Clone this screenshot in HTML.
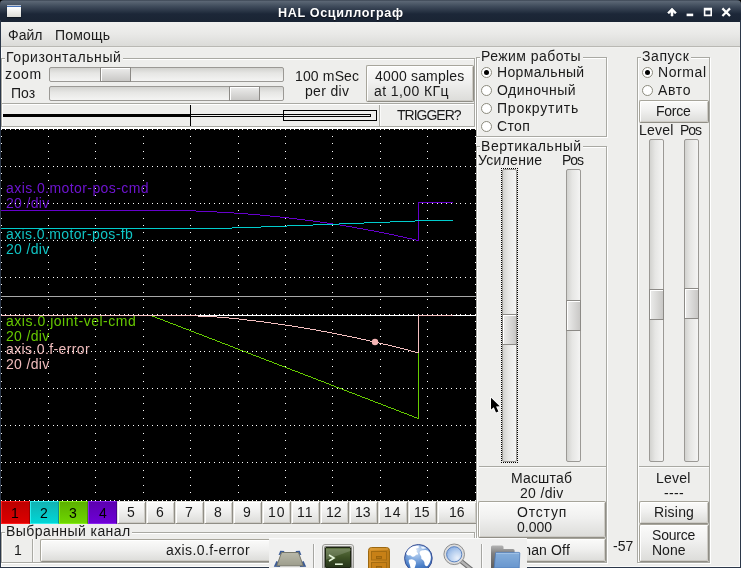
<!DOCTYPE html>
<html><head><meta charset="utf-8"><title>HAL</title>
<style>
html,body{margin:0;padding:0}
body{width:741px;height:568px;overflow:hidden;background:#eeeeec;position:relative;font-family:"Liberation Sans",sans-serif;}
.t{position:absolute;white-space:pre;line-height:16px;font-size:14px;color:#1a1a1a;will-change:transform;}
.a{position:absolute;box-sizing:border-box}
.btn{position:absolute;box-sizing:border-box;border:1px solid #a7a59b;border-right-color:#908e86;border-bottom-color:#908e86;border-radius:2px;background:linear-gradient(#fbfbfa,#f0f0ef 45%,#dcdcd9);box-shadow:inset 1px 1px 0 #ffffff,inset -1px -1px 0 #cdcbc5}
.fr{position:absolute;box-sizing:border-box;border:1px solid #a9a9a3;box-shadow:inset 1px 1px 0 #fff,1px 1px 0 #fff}
.hs{position:absolute;box-sizing:border-box;border:1px solid #9b9995;border-radius:2px;background:linear-gradient(#d2d2cf,#e6e6e4 40%,#f4f4f3)}
.ht{position:absolute;box-sizing:border-box;border:1px solid #8c8a86;background:linear-gradient(#ececeb,#c9c8c6);box-shadow:inset 1px 1px 0 #fff}
.vs{position:absolute;box-sizing:border-box;border:1px solid #9b9995;border-radius:2px;background:linear-gradient(90deg,#d2d2cf,#e6e6e4 40%,#f4f4f3)}
.vt{position:absolute;box-sizing:border-box;border:1px solid #8c8a86;background:linear-gradient(90deg,#ececeb,#c9c8c6);box-shadow:inset 1px 1px 0 #fff}
.rd{position:absolute;box-sizing:border-box;width:11px;height:11px;border-radius:50%;border:1px solid #8c8b7e;background:#fff}
.rd.on::after{content:"";position:absolute;left:2px;top:2px;width:5px;height:5px;border-radius:50%;background:#000}
.cb{position:absolute;box-sizing:border-box;top:501px;height:23px}
</style></head><body>

<div class="a" style="left:0;top:0;width:741px;height:22px;background:linear-gradient(#2e3846 0,#5d6876 1px,#3c4858 7px,#1c2738 14px,#1a2434 22px);border-radius:4px 4px 0 0"></div>
<div class="a" style="left:0;top:0;width:741px;height:4px;background:#000;z-index:-1"></div>
<div class="a" style="left:0;top:20px;width:1px;height:548px;background:#2b3749"></div><div class="a" style="left:1px;top:47px;width:1px;height:520px;background:#fafaf9"></div>
<div class="a" style="left:740px;top:20px;width:1px;height:548px;background:#2b3749"></div><div class="a" style="left:739px;top:47px;width:1px;height:520px;background:#f8f8f7"></div>
<div class="a" style="left:0;top:567px;width:741px;height:1px;background:#2b3749"></div><div class="a" style="left:1px;top:566px;width:739px;height:1px;background:#fafaf9"></div>
<div class="a" style="left:7px;top:5px;width:14px;height:12px;background:linear-gradient(#b9c0cc 0,#b9c0cc 1px,#3d6ab2 1px,#4a76ba 2px,#ffffff 2px,#fdfdfd 3px,#dcdcd7 12px);box-shadow:0 1px 1px rgba(10,14,22,.55)"></div>
<svg class="a" style="left:660px;top:0" width="80" height="22" viewBox="660 0 80 22">
<path d="M672 8 L667.6 12.6 L669 13.8 L671 11.8 L671 16 L673 16 L673 11.8 L675 13.8 L676.4 12.6 Z" fill="#fff" stroke="#fff" stroke-width="0.6" stroke-linejoin="round"/>
<rect x="686.6" y="13.6" width="6.6" height="2.6" fill="#fff"/>
<path d="M703.8 7.8 h8.2 v8.4 h-8.2 Z M705.4 10.4 v4.2 h5 v-4.2 Z" fill="#fff" fill-rule="evenodd"/>
<path d="M722.4 8.4 L730 16 M730 8.4 L722.4 16" stroke="#fff" stroke-width="2.2" fill="none"/>
</svg>
<div class="a" style="left:1px;top:22px;width:739px;height:24px;background:linear-gradient(#f1f1ef,#e9e9e7 50%,#dbdbd8)"></div>
<div class="a" style="left:1px;top:46px;width:739px;height:1px;background:#b9b8b3"></div>
<div class="a" style="left:1px;top:47px;width:739px;height:1px;background:#f1f1ef"></div>
<div class="a" style="left:1px;top:58px;width:1px;height:69px;background:#a9a9a3"></div><div class="a" style="left:2px;top:59px;width:1px;height:69px;background:#fff"></div><div class="fr" style="left:1px;top:58px;width:474px;height:46px"></div>
<div class="a" style="left:5px;top:52px;width:118px;height:14px;background:#eeeeec"></div>
<div class="hs" style="left:49px;top:67px;width:235px;height:15px"></div>
<div class="ht" style="left:100px;top:67px;width:31px;height:15px"></div>
<div class="hs" style="left:49px;top:86px;width:235px;height:15px"></div>
<div class="ht" style="left:229px;top:86px;width:31px;height:15px"></div>
<div class="btn" style="left:366px;top:65px;width:108px;height:37px"></div>
<div class="a" style="left:1px;top:126px;width:474px;height:1px;background:#a9a9a3"></div><div class="a" style="left:474px;top:104px;width:1px;height:23px;background:#a9a9a3"></div><div class="a" style="left:475px;top:104px;width:1px;height:25px;background:#fff"></div>
<div class="a" style="left:2px;top:127px;width:474px;height:2px;background:#fff"></div>
<div class="a" style="left:3px;top:114px;width:188px;height:3px;background:#000"></div>
<div class="a" style="left:190px;top:114px;width:181px;height:3px;border:1px solid #000;background:#eeeeec"></div>
<div class="a" style="left:190px;top:105px;width:1px;height:21px;background:#000"></div>
<div class="a" style="left:283px;top:110px;width:94px;height:11px;border:1px solid #000"></div>
<div class="a" style="left:379px;top:105px;width:1px;height:21px;background:#a9a9a3"></div>
<div class="a" style="left:380px;top:105px;width:1px;height:21px;background:#fafaf9"></div>
<div class="a" style="left:1px;top:129px;width:475px;height:372px;background:#000"></div>
<svg class="a" style="left:0;top:128px;z-index:2" width="477" height="373" viewBox="0 128 477 373" shape-rendering="crispEdges"><defs><path id="rw" d="M1 0.5h1M5 0.5h1M10 0.5h1M15 0.5h1M19 0.5h1M24 0.5h1M29 0.5h1M34 0.5h1M38 0.5h1M43 0.5h1M48 0.5h1M53 0.5h1M57 0.5h1M62 0.5h1M67 0.5h1M72 0.5h1M76 0.5h1M81 0.5h1M86 0.5h1M91 0.5h1M95 0.5h1M100 0.5h1M105 0.5h1M110 0.5h1M114 0.5h1M119 0.5h1M124 0.5h1M128 0.5h1M133 0.5h1M138 0.5h1M143 0.5h1M147 0.5h1M152 0.5h1M157 0.5h1M162 0.5h1M166 0.5h1M171 0.5h1M176 0.5h1M181 0.5h1M185 0.5h1M190 0.5h1M195 0.5h1M200 0.5h1M204 0.5h1M209 0.5h1M214 0.5h1M219 0.5h1M223 0.5h1M228 0.5h1M233 0.5h1M238 0.5h1M242 0.5h1M247 0.5h1M252 0.5h1M256 0.5h1M261 0.5h1M266 0.5h1M271 0.5h1M275 0.5h1M280 0.5h1M285 0.5h1M290 0.5h1M294 0.5h1M299 0.5h1M304 0.5h1M309 0.5h1M313 0.5h1M318 0.5h1M323 0.5h1M328 0.5h1M332 0.5h1M337 0.5h1M342 0.5h1M347 0.5h1M351 0.5h1M356 0.5h1M361 0.5h1M365 0.5h1M370 0.5h1M375 0.5h1M380 0.5h1M384 0.5h1M389 0.5h1M394 0.5h1M399 0.5h1M403 0.5h1M408 0.5h1M413 0.5h1M418 0.5h1M422 0.5h1M427 0.5h1M432 0.5h1M437 0.5h1M441 0.5h1M446 0.5h1M451 0.5h1M456 0.5h1M460 0.5h1M465 0.5h1M470 0.5h1M475 0.5h1" stroke="#fff" stroke-width="1" fill="none"/><path id="cl" d="M0 0.5h1M0 7.5h1M0 14.5h1M0 22.5h1M0 29.5h1M0 37.5h1M0 44.5h1M0 51.5h1M0 59.5h1M0 66.5h1M0 74.5h1M0 81.5h1M0 89.5h1M0 96.5h1M0 103.5h1M0 111.5h1M0 118.5h1M0 126.5h1M0 133.5h1M0 140.5h1M0 148.5h1M0 155.5h1M0 163.5h1M0 170.5h1M0 178.5h1M0 185.5h1M0 192.5h1M0 200.5h1M0 207.5h1M0 215.5h1M0 222.5h1M0 230.5h1M0 237.5h1M0 244.5h1M0 252.5h1M0 259.5h1M0 267.5h1M0 274.5h1M0 281.5h1M0 289.5h1M0 296.5h1M0 304.5h1M0 311.5h1M0 319.5h1M0 326.5h1M0 333.5h1M0 341.5h1M0 348.5h1M0 356.5h1M0 363.5h1M0 371.5h1" stroke="#fff" stroke-width="1" fill="none"/></defs><use href="#rw" y="129"/><use href="#rw" y="166"/><use href="#rw" y="203"/><use href="#rw" y="240"/><use href="#rw" y="277"/><use href="#rw" y="314"/><use href="#rw" y="351"/><use href="#rw" y="388"/><use href="#rw" y="425"/><use href="#rw" y="462"/><use href="#rw" y="500"/><use href="#cl" x="1" y="129"/><use href="#cl" x="48" y="129"/><use href="#cl" x="95" y="129"/><use href="#cl" x="143" y="129"/><use href="#cl" x="190" y="129"/><use href="#cl" x="238" y="129"/><use href="#cl" x="285" y="129"/><use href="#cl" x="332" y="129"/><use href="#cl" x="380" y="129"/><use href="#cl" x="427" y="129"/><use href="#cl" x="475" y="129"/><rect x="1" y="296" width="475" height="1" fill="#a8a8a8"/><rect x="1" y="315" width="475" height="1" fill="#ffffff"/><path d="M1 210.5h195M196 211.5h21M217 212.5h17M234 213.5h14M248 214.5h12M260 215.5h10M270 216.5h10M280 217.5h9M289 218.5h8M297 219.5h8M305 220.5h8M313 221.5h7M320 222.5h7M327 223.5h6M333 224.5h7M340 225.5h6M346 226.5h6M352 227.5h5M357 228.5h6M363 229.5h5M368 230.5h6M374 231.5h5M379 232.5h5M384 233.5h5M389 234.5h5M394 235.5h4M398 236.5h5M403 237.5h4M407 238.5h5M412 239.5h4M416 240.5h2M418 202.5h35M418.5 202v39" stroke="#6600cc" fill="none"/><path d="M1 228.5h231M232 227.5h29M261 226.5h26M287 225.5h26M313 224.5h26M339 223.5h25M364 222.5h26M390 221.5h25M415 220.5h38" stroke="#00cccc" fill="none"/><path d="M1 315.5h151M152 316.5h3M155 317.5h2M157 318.5h3M160 319.5h3M163 320.5h2M165 321.5h3M168 322.5h2M170 323.5h3M173 324.5h3M176 325.5h2M178 326.5h3M181 327.5h2M183 328.5h3M186 329.5h3M189 330.5h2M191 331.5h3M194 332.5h2M196 333.5h3M199 334.5h3M202 335.5h2M204 336.5h3M207 337.5h2M209 338.5h3M212 339.5h3M215 340.5h2M217 341.5h3M220 342.5h2M222 343.5h3M225 344.5h3M228 345.5h2M230 346.5h3M233 347.5h2M235 348.5h3M238 349.5h2M240 350.5h3M243 351.5h3M246 352.5h2M248 353.5h3M251 354.5h2M253 355.5h3M256 356.5h3M259 357.5h2M261 358.5h3M264 359.5h2M266 360.5h3M269 361.5h3M272 362.5h2M274 363.5h3M277 364.5h2M279 365.5h3M282 366.5h3M285 367.5h2M287 368.5h3M290 369.5h2M292 370.5h3M295 371.5h3M298 372.5h2M300 373.5h3M303 374.5h2M305 375.5h3M308 376.5h3M311 377.5h2M313 378.5h3M316 379.5h2M318 380.5h3M321 381.5h3M324 382.5h2M326 383.5h3M329 384.5h2M331 385.5h3M334 386.5h2M336 387.5h3M339 388.5h3M342 389.5h2M344 390.5h3M347 391.5h2M349 392.5h3M352 393.5h3M355 394.5h2M357 395.5h3M360 396.5h2M362 397.5h3M365 398.5h3M368 399.5h2M370 400.5h3M373 401.5h2M375 402.5h3M378 403.5h3M381 404.5h2M383 405.5h3M386 406.5h2M388 407.5h3M391 408.5h3M394 409.5h2M396 410.5h3M399 411.5h2M401 412.5h3M404 413.5h3M407 414.5h2M409 415.5h3M412 416.5h2M414 417.5h3M417 418.5h1M418 315.5h35M418.5 315v104" stroke="#66cc00" fill="none"/><path d="M1 315.5h197M198 316.5h19M217 317.5h12M229 318.5h10M239 319.5h8M247 320.5h9M256 321.5h8M264 322.5h7M271 323.5h7M278 324.5h7M285 325.5h7M292 326.5h6M298 327.5h6M304 328.5h6M310 329.5h6M316 330.5h5M321 331.5h6M327 332.5h5M332 333.5h5M337 334.5h5M342 335.5h5M347 336.5h5M352 337.5h5M357 338.5h4M361 339.5h5M366 340.5h4M370 341.5h5M375 342.5h4M379 343.5h4M383 344.5h5M388 345.5h4M392 346.5h4M396 347.5h4M400 348.5h4M404 349.5h4M408 350.5h3M411 351.5h4M415 352.5h3M418 315.5h35M418.5 315v38" stroke="#f4c0c0" fill="none"/><circle cx="375" cy="342" r="3.2" fill="#f4b4b4" shape-rendering="auto"/></svg>
<div class="cb" style="left:1px;width:29px;background:linear-gradient(#bd0000,#dc0000);border:1px solid #ff1e1e;border-right-color:#9a0000"></div>
<div class="cb" style="left:30px;width:29px;background:linear-gradient(#12b2b2,#00d6d6);border:1px solid #30eeee;border-right-color:#0e9090"></div>
<div class="cb" style="left:59px;width:29px;background:linear-gradient(#5cb000,#6ed600);border:1px solid #86ee18;border-right-color:#4a9000"></div>
<div class="cb" style="left:88px;width:29px;background:linear-gradient(#5c00b0,#6e00d6);border:1px solid #8a24ee;border-right-color:#480090"></div>
<div class="btn" style="left:117px;top:501px;width:29px;height:23px;border-radius:1px;border-left-color:#e2e1dc;border-top-color:#e2e1dc"></div>
<div class="btn" style="left:146px;top:501px;width:29px;height:23px;border-radius:1px;border-left-color:#e2e1dc;border-top-color:#e2e1dc"></div>
<div class="btn" style="left:175px;top:501px;width:29px;height:23px;border-radius:1px;border-left-color:#e2e1dc;border-top-color:#e2e1dc"></div>
<div class="btn" style="left:204px;top:501px;width:29px;height:23px;border-radius:1px;border-left-color:#e2e1dc;border-top-color:#e2e1dc"></div>
<div class="btn" style="left:233px;top:501px;width:29px;height:23px;border-radius:1px;border-left-color:#e2e1dc;border-top-color:#e2e1dc"></div>
<div class="btn" style="left:262px;top:501px;width:29px;height:23px;border-radius:1px;border-left-color:#e2e1dc;border-top-color:#e2e1dc"></div>
<div class="btn" style="left:291px;top:501px;width:29px;height:23px;border-radius:1px;border-left-color:#e2e1dc;border-top-color:#e2e1dc"></div>
<div class="btn" style="left:320px;top:501px;width:29px;height:23px;border-radius:1px;border-left-color:#e2e1dc;border-top-color:#e2e1dc"></div>
<div class="btn" style="left:349px;top:501px;width:29px;height:23px;border-radius:1px;border-left-color:#e2e1dc;border-top-color:#e2e1dc"></div>
<div class="btn" style="left:378px;top:501px;width:30px;height:23px;border-radius:1px;border-left-color:#e2e1dc;border-top-color:#e2e1dc"></div>
<div class="btn" style="left:408px;top:501px;width:29px;height:23px;border-radius:1px;border-left-color:#e2e1dc;border-top-color:#e2e1dc"></div>
<div class="btn" style="left:437px;top:501px;width:40px;height:23px;border-radius:1px;border-left-color:#e2e1dc;border-top-color:#e2e1dc"></div>
<div class="fr" style="left:1px;top:532px;width:474px;height:31px"></div>
<div class="a" style="left:5px;top:526px;width:127px;height:14px;background:#eeeeec"></div>
<div class="a" style="left:32px;top:539px;width:1px;height:23px;background:#a9a9a3"></div>
<div class="a" style="left:33px;top:539px;width:1px;height:23px;background:#fafaf9"></div>
<div class="btn" style="left:40px;top:539px;width:340px;height:23px"></div>
<div class="fr" style="left:476px;top:57px;width:131px;height:80px"></div>
<div class="a" style="left:480px;top:51px;width:103px;height:14px;background:#eeeeec"></div>
<div class="rd on" style="left:481px;top:67px"></div>
<div class="rd" style="left:481px;top:85px"></div>
<div class="rd" style="left:481px;top:103px"></div>
<div class="rd" style="left:481px;top:121px"></div>
<div class="fr" style="left:476px;top:146px;width:131px;height:417px"></div>
<div class="a" style="left:480px;top:140px;width:103px;height:14px;background:#eeeeec"></div>
<div class="a" style="left:501px;top:168px;width:17px;height:295px;border:1px dotted #000"></div>
<div class="vs" style="left:502px;top:169px;width:15px;height:293px"></div>
<div class="vt" style="left:502px;top:314px;width:15px;height:31px"></div>
<div class="vs" style="left:566px;top:169px;width:15px;height:293px"></div>
<div class="vt" style="left:566px;top:300px;width:15px;height:31px"></div>
<div class="a" style="left:479px;top:466px;width:127px;height:1px;background:#a9a9a3"></div>
<div class="a" style="left:479px;top:467px;width:127px;height:1px;background:#fafaf9"></div>
<div class="btn" style="left:478px;top:501px;width:128px;height:37px"></div>
<div class="btn" style="left:478px;top:538px;width:128px;height:24px"></div>
<div class="fr" style="left:637px;top:57px;width:73px;height:506px"></div>
<div class="a" style="left:641px;top:51px;width:50px;height:14px;background:#eeeeec"></div>
<div class="rd on" style="left:642px;top:67px"></div>
<div class="rd" style="left:642px;top:85px"></div>
<div class="btn" style="left:639px;top:100px;width:70px;height:23px"></div>
<div class="vs" style="left:649px;top:139px;width:15px;height:323px"></div>
<div class="vt" style="left:649px;top:289px;width:15px;height:31px"></div>
<div class="vs" style="left:684px;top:139px;width:15px;height:323px"></div>
<div class="vt" style="left:684px;top:288px;width:15px;height:31px"></div>
<div class="a" style="left:639px;top:466px;width:70px;height:1px;background:#a9a9a3"></div>
<div class="a" style="left:639px;top:467px;width:70px;height:1px;background:#fafaf9"></div>
<div class="btn" style="left:639px;top:501px;width:70px;height:23px"></div>
<div class="btn" style="left:639px;top:524px;width:70px;height:38px"></div>
<svg class="a" style="left:488px;top:395px;z-index:5" width="16" height="22" viewBox="0 0 16 22"><path d="M3 2.8 L3 14.6 L5.8 12.2 L8 17.4 L10.4 16.4 L8.1 11.4 L11.8 11.2 Z" fill="#000" stroke="#fff" stroke-width="1.8" stroke-linejoin="round" paint-order="stroke fill"/></svg>
<span class="t" style="left:277.70px;top:5px;color:#ffffff;font-weight:bold;text-shadow:0 1px 1px rgba(0,0,0,.55);font-size:12.6px;letter-spacing:0.643px;">HAL Осциллограф</span>
<span class="t" style="left:8.00px;top:27px;">Файл</span>
<span class="t" style="left:55.00px;top:27px;letter-spacing:0.200px;">Помощь</span>
<span class="t" style="left:6.00px;top:49px;letter-spacing:0.615px;">Горизонтальный</span>
<span class="t" style="left:5.00px;top:66px;letter-spacing:0.667px;">zoom</span>
<span class="t" style="left:10.80px;top:85px;">Поз</span>
<span class="t" style="left:295.20px;top:68px;letter-spacing:0.143px;">100 mSec</span>
<span class="t" style="left:304.80px;top:83px;letter-spacing:0.333px;">per div</span>
<span class="t" style="left:375.00px;top:68px;letter-spacing:0.182px;">4000 samples</span>
<span class="t" style="left:374.00px;top:83px;letter-spacing:0.400px;">at 1,00 КГц</span>
<span class="t" style="left:396.50px;top:107px;letter-spacing:-1.000px;">TRIGGER?</span>
<span class="t" style="left:481.00px;top:48px;letter-spacing:0.455px;">Режим работы</span>
<span class="t" style="left:497.00px;top:64px;letter-spacing:0.333px;">Нормальный</span>
<span class="t" style="left:497.00px;top:82px;letter-spacing:0.500px;">Одиночный</span>
<span class="t" style="left:497.00px;top:100px;letter-spacing:0.778px;">Прокрутить</span>
<span class="t" style="left:497.00px;top:118px;letter-spacing:0.333px;">Стоп</span>
<span class="t" style="left:642.00px;top:48px;letter-spacing:0.600px;">Запуск</span>
<span class="t" style="left:658.00px;top:64px;letter-spacing:0.600px;">Normal</span>
<span class="t" style="left:658.00px;top:82px;letter-spacing:0.667px;">Авто</span>
<span class="t" style="left:656.00px;top:103px;letter-spacing:-0.250px;">Force</span>
<span class="t" style="left:639.00px;top:122px;letter-spacing:0.250px;">Level</span>
<span class="t" style="left:680.00px;top:122px;letter-spacing:-1.000px;">Pos</span>
<span class="t" style="left:481.00px;top:138px;letter-spacing:0.545px;">Вертикальный</span>
<span class="t" style="left:477.50px;top:152px;letter-spacing:0.286px;">Усиление</span>
<span class="t" style="left:562.00px;top:152px;letter-spacing:-1.000px;">Pos</span>
<span class="t" style="left:511.00px;top:470px;letter-spacing:0.167px;">Масштаб</span>
<span class="t" style="left:520.00px;top:485px;letter-spacing:0.333px;">20 /div</span>
<span class="t" style="left:516.50px;top:504px;letter-spacing:0.800px;">Отступ</span>
<span class="t" style="left:516.50px;top:519px;">0.000</span>
<span class="t" style="left:513.00px;top:542px;letter-spacing:0.143px;">Chan Off</span>
<span class="t" style="left:613.00px;top:538px;">-57</span>
<span class="t" style="left:655.80px;top:470px;letter-spacing:0.250px;">Level</span>
<span class="t" style="left:663.70px;top:485px;letter-spacing:0.333px;">----</span>
<span class="t" style="left:654.00px;top:504px;letter-spacing:0.200px;">Rising</span>
<span class="t" style="left:652.00px;top:527px;letter-spacing:-0.200px;">Source</span>
<span class="t" style="left:652.00px;top:542px;">None</span>
<span class="t" style="left:6.00px;top:523px;letter-spacing:0.429px;">Выбранный канал</span>
<span class="t" style="left:13.50px;top:542px;">1</span>
<span class="t" style="left:165.90px;top:542px;letter-spacing:0.385px;">axis.0.f-error</span>
<span class="t" style="left:6.00px;top:180px;color:#6e14d0;letter-spacing:0.421px;">axis.0.motor-pos-cmd</span>
<span class="t" style="left:6.00px;top:195px;color:#6e14d0;letter-spacing:0.333px;">20 /div</span>
<span class="t" style="left:6.00px;top:226px;color:#10c4c4;letter-spacing:0.389px;">axis.0.motor-pos-fb</span>
<span class="t" style="left:6.00px;top:241px;color:#10c4c4;letter-spacing:0.333px;">20 /div</span>
<span class="t" style="left:6.00px;top:313px;color:#66c800;letter-spacing:0.526px;">axis.0.joint-vel-cmd</span>
<span class="t" style="left:6.00px;top:328px;color:#66c800;letter-spacing:0.333px;">20 /div</span>
<span class="t" style="left:6.00px;top:341px;color:#f0bcbc;letter-spacing:0.385px;">axis.0.f-error</span>
<span class="t" style="left:6.00px;top:356px;color:#f0bcbc;letter-spacing:0.333px;">20 /div</span>
<span class="t" style="left:11.00px;top:505px;color:#000;">1</span>
<span class="t" style="left:40.00px;top:505px;color:#000;">2</span>
<span class="t" style="left:69.00px;top:505px;color:#000;">3</span>
<span class="t" style="left:98.50px;top:505px;color:#000;">4</span>
<span class="t" style="left:127.20px;top:504px;">5</span>
<span class="t" style="left:156.20px;top:504px;">6</span>
<span class="t" style="left:185.20px;top:504px;">7</span>
<span class="t" style="left:214.20px;top:504px;">8</span>
<span class="t" style="left:243.20px;top:504px;">9</span>
<span class="t" style="left:267.70px;top:504px;letter-spacing:1.000px;">10</span>
<span class="t" style="left:297.20px;top:504px;letter-spacing:1.000px;">11</span>
<span class="t" style="left:326.20px;top:504px;">12</span>
<span class="t" style="left:355.20px;top:504px;">13</span>
<span class="t" style="left:384.20px;top:504px;letter-spacing:1.000px;">14</span>
<span class="t" style="left:414.20px;top:504px;">15</span>
<span class="t" style="left:448.70px;top:504px;">16</span>
<div class="a" style="left:269px;top:538px;width:258px;height:30px;background:#f0f0ef;border-top:1px solid #fbfbfb;z-index:8"></div>
<svg class="a" style="left:269px;top:538px;z-index:9" width="258" height="30" viewBox="269 538 258 30">
<defs>
<linearGradient id="gTr" x1="0" y1="0" x2="0" y2="1"><stop offset="0" stop-color="#b9b9aa"/><stop offset="1" stop-color="#9d9d8c"/></linearGradient>
<linearGradient id="gTm" x1="0" y1="0" x2="0" y2="1"><stop offset="0" stop-color="#5f7443"/><stop offset="0.5" stop-color="#3e5226"/><stop offset="1" stop-color="#26341a"/></linearGradient>
<linearGradient id="gTf" x1="0" y1="0" x2="0" y2="1"><stop offset="0" stop-color="#eeeeec"/><stop offset="1" stop-color="#bcbcb8"/></linearGradient>
<linearGradient id="gCb" x1="0" y1="0" x2="1" y2="0"><stop offset="0" stop-color="#d8932a"/><stop offset="0.5" stop-color="#cd881e"/><stop offset="1" stop-color="#bb7a16"/></linearGradient>
<radialGradient id="gGl" cx="0.42" cy="0.2" r="0.85"><stop offset="0" stop-color="#d4e3f6"/><stop offset="0.35" stop-color="#8fb4e4"/><stop offset="0.7" stop-color="#4c80c8"/><stop offset="1" stop-color="#3362ae"/></radialGradient>
<radialGradient id="gLn" cx="0.7" cy="0.75" r="0.9"><stop offset="0" stop-color="#eaf1fb"/><stop offset="0.55" stop-color="#b4cdee"/><stop offset="1" stop-color="#7ea6de"/></radialGradient>
<linearGradient id="gFd" x1="0" y1="0" x2="0" y2="1"><stop offset="0" stop-color="#86afdb"/><stop offset="1" stop-color="#6896ce"/></linearGradient>
<linearGradient id="gFb" x1="0" y1="0" x2="0" y2="1"><stop offset="0" stop-color="#b4b4b4"/><stop offset="0.35" stop-color="#808080"/><stop offset="1" stop-color="#5e5e5e"/></linearGradient>
</defs>
<!-- show desktop trapezoid -->
<path d="M276.4 561 L273.8 566.8 L280 567 L280.4 563 Z" fill="#3b5b96"/><path d="M303.6 561 L306.2 566.8 L300 567 L299.6 563 Z" fill="#3b5b96"/>
<path d="M278.6 555 L280.2 550.8 L284.4 551 L283.2 554.6 Z" fill="#3b5b96"/><path d="M301.4 555 L299.8 550.8 L295.6 551 L296.8 554.6 Z" fill="#3b5b96"/>
<path d="M281.5 552.5 L298.5 552.5 L303.2 565.8 L276.8 565.8 Z" fill="url(#gTr)" stroke="#77776a" stroke-width="1" stroke-linejoin="round"/>
<!-- separator -->
<rect x="313" y="544" width="1" height="24" fill="#a6a6a2"/><rect x="314" y="544" width="1" height="24" fill="#fbfbfb"/>
<!-- terminal -->
<rect x="322.5" y="544.5" width="31" height="26" rx="2.5" fill="url(#gTf)" stroke="#9c9c98" stroke-width="1"/>
<rect x="324.5" y="546.5" width="27" height="22" rx="1" fill="none" stroke="#7e7e7a" stroke-width="1"/>
<rect x="325.5" y="547.5" width="25" height="20" rx="0.5" fill="url(#gTm)" stroke="#1d2612" stroke-width="1"/>
<path d="M326 549 L351 549 L351 550.8 L326 559.7 Z" fill="#ffffff" fill-opacity="0.16"/>
<path d="M329 555 L334 558 L329 561" fill="none" stroke="#e4f4d8" stroke-width="1.6"/>
<rect x="335" y="563.4" width="7.8" height="1.6" fill="#e4f4d8"/>
<!-- cabinet -->
<path d="M368.5 568.5 L368.5 550.5 Q368.5 547.5 371.5 547.5 L386.5 547.5 Q389.5 547.5 389.5 550.5 L389.5 568.5 Z" fill="url(#gCb)" stroke="#9c6810" stroke-width="1"/>
<path d="M370 549 L388 549" stroke="#e2a440" stroke-width="1"/>
<rect x="371.5" y="551.5" width="15" height="8.5" fill="#c78016" stroke="#a56c10" stroke-width="1"/>
<rect x="371.5" y="562.5" width="15" height="8.5" fill="#c78016" stroke="#a56c10" stroke-width="1"/>
<rect x="376.5" y="556.5" width="5" height="2" fill="#b27412" stroke="#96600c" stroke-width="0.8"/>
<rect x="376.5" y="566.5" width="5" height="2" fill="#b27412" stroke="#96600c" stroke-width="0.8"/>
<!-- globe -->
<circle cx="418.4" cy="558.3" r="13.8" fill="url(#gGl)" stroke="#3a4f92" stroke-width="1"/>
<path d="M406.2 553.5 Q407.5 549.5 411 547.3 Q414 545.6 417.5 545.8 L419.5 547 Q417.5 548.6 415.6 548.8 Q417.4 550 416.6 552 Q418.6 552.6 418 554.6 Q416 554.4 415 556 Q413.4 557.4 411.8 556.4 Q410.6 554.6 408.6 555.4 Q406.8 555.4 406.2 553.5 Z" fill="#fff"/>
<path d="M409 559.8 Q411.6 558.6 414 560 Q416.4 561.4 416 563.6 Q415.4 566 414.6 568 L410.6 568 Q410 565 409 562.6 Q408.4 561 409 559.8 Z" fill="#fff"/>
<path d="M419.6 552 Q421 549.8 423.6 550.2 Q425.6 549.4 427.6 550.6 Q430 552 430.4 554.6 Q431.4 557 430.6 560 Q429.8 563.4 427.8 565.8 Q425.6 567 424.6 564.6 Q424.8 561.6 423 560 Q420.6 558.8 421.2 556.4 Q419.2 554.4 419.6 552 Z" fill="#fff"/>
<path d="M421 546.4 Q424 546.6 426.4 548 Q424.4 549.2 421.6 548.4 Z" fill="#eef4fc"/>
<!-- magnifier -->
<path d="M461.5 561.5 L472 570" stroke="#6f6f6f" stroke-width="4.6" stroke-linecap="round"/>
<path d="M461.5 561.5 L472 570" stroke="#b4b4b4" stroke-width="2.4" stroke-linecap="round"/>
<circle cx="454.2" cy="554.3" r="10.3" fill="#dcdcdc" stroke="#8e8e8e" stroke-width="1"/>
<circle cx="454.2" cy="554.3" r="7.6" fill="url(#gLn)" stroke="#5a82c0" stroke-width="1"/>
<!-- separator -->
<rect x="481" y="544" width="1" height="24" fill="#a6a6a2"/><rect x="482" y="544" width="1" height="24" fill="#fbfbfb"/>
<!-- folder -->
<path d="M491 568 L491 547 Q491 545.5 492.5 545.5 L502 545.5 Q503.5 545.5 503.5 547 L503.5 549 L513 549 Q514.6 549 514.6 550.5 L514.6 568 Z" fill="url(#gFb)"/>
<path d="M495.6 552.8 Q495.7 552.4 496.4 552.4 L519 552.4 Q519.8 552.4 519.8 553.2 L519.2 568 L494.2 568 Z" fill="url(#gFd)" stroke="#4f7cba" stroke-width="0.8"/><path d="M496 553.4 L519 553.4" stroke="#a9c8ea" stroke-width="0.8"/>
</svg>

</body></html>
